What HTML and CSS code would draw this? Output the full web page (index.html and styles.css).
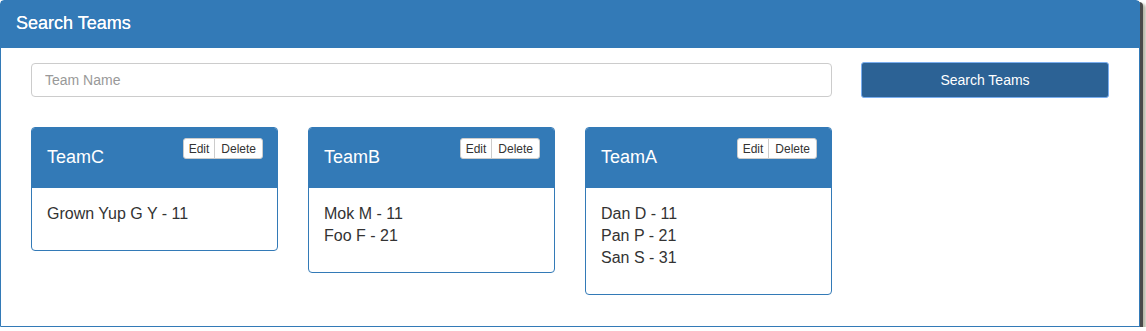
FILE: index.html
```html
<!DOCTYPE html>
<html>
<head>
<meta charset="utf-8">
<link rel="stylesheet" href="styles.css">
</head>
<body>
<div class="panel">
  <div class="panel-heading">Search Teams</div>
  <div class="panel-body">
    <div class="search-row">
      <input class="search-input" type="text" placeholder="Team Name">
      <button class="search-btn">Search Teams</button>
    </div>
    <div class="cards">
      <div class="card">
        <div class="card-head">
          <span class="card-title">TeamC</span>
          <span class="btn-group"><button class="btn-sm">Edit</button><button class="btn-sm">Delete</button></span>
        </div>
        <div class="card-body">
          <div class="member">Grown Yup G Y - 11</div>
        </div>
      </div>
      <div class="card">
        <div class="card-head">
          <span class="card-title">TeamB</span>
          <span class="btn-group"><button class="btn-sm">Edit</button><button class="btn-sm">Delete</button></span>
        </div>
        <div class="card-body">
          <div class="member">Mok M - 11</div>
          <div class="member">Foo F - 21</div>
        </div>
      </div>
      <div class="card">
        <div class="card-head">
          <span class="card-title">TeamA</span>
          <span class="btn-group"><button class="btn-sm">Edit</button><button class="btn-sm">Delete</button></span>
        </div>
        <div class="card-body">
          <div class="member">Dan D - 11</div>
          <div class="member">Pan P - 21</div>
          <div class="member">San S - 31</div>
        </div>
      </div>
    </div>
  </div>
</div>
</body>
</html>
```
FILE: styles.css
```css
html, body {
  margin: 0;
  padding: 0;
  background: #ffffff;
  font-family: "Liberation Sans", Arial, sans-serif;
  color: #333333;
}

.panel {
  width: 1140px;
  height: 327px;
  box-sizing: border-box;
  border: 1px solid #337ab7;
  border-radius: 4px 4px 0 0;
  background: #ffffff;
  box-shadow: 3px 2px 0 #4a4a4a, 6px 4px 3px #b8b8a8;
  display: flex;
  flex-direction: column;
}

.panel-heading {
  height: 47px;
  box-sizing: border-box;
  background: #337ab7;
  color: #ffffff;
  font-size: 18px;
  line-height: 22px;
  padding: 11px 15px 14px;
  text-shadow: 0 0 0.4px #ffffff;
}

.panel-body {
  padding: 14px 28px 0 30px;
}

.search-row {
  display: grid;
  grid-template-columns: 801px 248px;
  column-gap: 29px;
  align-items: center;
}

.search-input {
  height: 34px;
  box-sizing: border-box;
  border: 1px solid #cccccc;
  border-radius: 4px;
  padding: 6px 13px;
  font-family: "Liberation Sans", Arial, sans-serif;
  font-size: 14px;
  color: #555555;
  outline: none;
}

.search-input::placeholder {
  color: #999999;
}

.search-btn {
  height: 36px;
  box-sizing: border-box;
  background: #2c6295;
  border: 1px solid #7aaef0;
  border-radius: 3px;
  color: #ffffff;
  font-family: "Liberation Sans", Arial, sans-serif;
  font-size: 14px;
  padding: 0;
}

.cards {
  display: flex;
  align-items: flex-start;
  gap: 30px;
  margin-top: 29px;
}

.card {
  width: 247px;
  box-sizing: border-box;
  border: 1px solid #337ab7;
  border-radius: 4px;
  overflow: hidden;
}

.card-head {
  height: 60px;
  box-sizing: border-box;
  background: #337ab7;
  padding: 10px 14px 0 15px;
  display: flex;
  justify-content: space-between;
  align-items: flex-start;
}

.card-title {
  color: #ffffff;
  font-size: 18px;
  line-height: 22px;
  margin-top: 8px;
}

.btn-group {
  display: flex;
}

.btn-sm {
  background: #ffffff;
  border: 1px solid #cccccc;
  color: #333333;
  font-family: "Liberation Sans", Arial, sans-serif;
  font-size: 12px;
  line-height: 18px;
  padding: 0 5px;
  height: 21px;
  box-sizing: border-box;
}

.btn-sm:first-child {
  border-radius: 3px 0 0 3px;
}

.btn-sm:last-child {
  border-radius: 0 3px 3px 0;
  margin-left: -1px;
  padding: 0 6px;
}

.card-body {
  padding: 15px 15px 25px;
  font-size: 16px;
  line-height: 22px;
}
```
